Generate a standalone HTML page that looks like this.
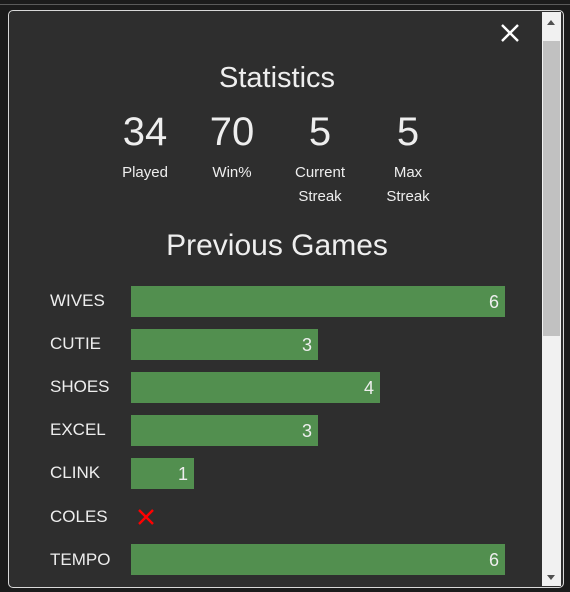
<!DOCTYPE html>
<html><head><meta charset="utf-8"><style>
*{margin:0;padding:0;box-sizing:border-box}
body{width:570px;height:592px;background:#1b1b1b;position:relative;overflow:hidden;font-family:"Liberation Sans",Arial,sans-serif;color:#eee}
.topline{position:absolute;left:0;top:4px;width:570px;height:1px;background:#5a5a5a}
.modal{position:absolute;left:8px;top:10px;width:556px;height:578px;border:1px solid #d8d8d8;border-radius:5px;background:#2e2e2e;overflow:hidden}
.sb{position:absolute;left:533px;top:1px;width:19px;height:574px;background:#f1f1f1}
.thumb{position:absolute;left:1px;top:29px;width:17px;height:295px;background:#c1c1c1}
.up{position:absolute;left:5px;top:8px;border-left:4px solid transparent;border-right:4px solid transparent;border-bottom:5px solid #505050}
.dn{position:absolute;left:5px;bottom:6px;border-left:4px solid transparent;border-right:4px solid transparent;border-top:5px solid #505050}
.a{position:absolute}
.c{text-align:center}
.num{font-size:40px;width:80px;top:99px}
.lab{font-size:15px;width:90px;top:150px;line-height:24px}
.wl{position:absolute;left:41px;font-size:17px}
.bar{position:absolute;left:122px;height:31px;background:#528f4f;color:#eee;font-size:18px;text-align:right;padding-right:6px;line-height:33px}
</style></head><body>
<div class="topline"></div>
<div class="modal">
<svg class="a" style="left:490px;top:11px" width="22" height="22" viewBox="0 0 22 22"><path d="M3 3L19 19M19 3L3 19" stroke="#fff" stroke-width="2.4"/></svg>
<div class="a c" style="left:0;width:536px;top:51px;font-size:29px">Statistics</div>
<div class="a c num" style="left:96px">34</div>
<div class="a c num" style="left:183px">70</div>
<div class="a c num" style="left:271px">5</div>
<div class="a c num" style="left:359px">5</div>
<div class="a c lab" style="left:91px">Played</div>
<div class="a c lab" style="left:178px">Win%</div>
<div class="a c lab" style="left:266px">Current<br>Streak</div>
<div class="a c lab" style="left:354px">Max<br>Streak</div>
<div class="a c" style="left:0;width:536px;top:218px;font-size:30px">Previous Games</div>
<div class="wl" style="top:280px">WIVES</div><div class="bar" style="top:275px;width:374px">6</div>
<div class="wl" style="top:323px">CUTIE</div><div class="bar" style="top:318px;width:187px">3</div>
<div class="wl" style="top:366px">SHOES</div><div class="bar" style="top:361px;width:249px">4</div>
<div class="wl" style="top:409px">EXCEL</div><div class="bar" style="top:404px;width:187px">3</div>
<div class="wl" style="top:452px">CLINK</div><div class="bar" style="top:447px;width:63px">1</div>
<div class="wl" style="top:496px">COLES</div>
<svg class="a" style="left:128px;top:497px" width="18" height="18" viewBox="0 0 18 18"><path d="M2 2L16 16M16 2L2 16" stroke="#f00" stroke-width="2.4"/></svg>
<div class="wl" style="top:539px">TEMPO</div><div class="bar" style="top:533px;width:374px">6</div>
<div class="sb"><div class="up"></div><div class="thumb"></div><div class="dn"></div></div>
</div>
</body></html>
